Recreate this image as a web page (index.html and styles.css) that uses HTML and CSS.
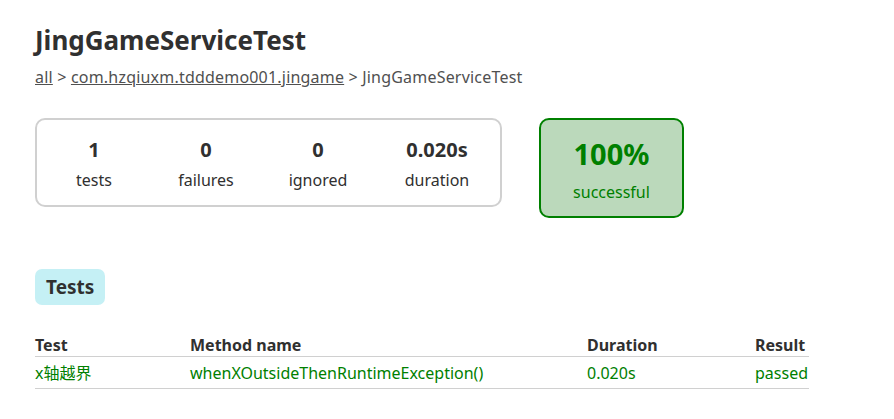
FILE: index.html
```html
<!DOCTYPE html>
<html>
<head>
<meta charset="utf-8">
<link rel="stylesheet" href="styles.css">
</head>
<body>
<div class="content">
  <h1 class="title">JingGameServiceTest</h1>
  <div class="breadcrumbs"><a href="#">all</a> &gt; <a href="#">com.hzqiuxm.tdddemo001.jingame</a> &gt; JingGameServiceTest</div>
  <div class="summary">
    <div class="summary-group">
      <div class="info-box"><div class="counter">1</div><p class="label">tests</p></div>
      <div class="info-box"><div class="counter">0</div><p class="label">failures</p></div>
      <div class="info-box"><div class="counter">0</div><p class="label">ignored</p></div>
      <div class="info-box last"><div class="counter">0.020s</div><p class="label">duration</p></div>
    </div>
    <div class="success-rate">
      <div class="percent">100%</div>
      <p class="label">successful</p>
    </div>
  </div>
  <div class="tabs">
    <span class="tab selected">Tests</span>
  </div>
  <table class="tests">
    <thead>
      <tr><th class="c1">Test</th><th class="c2">Method name</th><th class="c3">Duration</th><th class="c4">Result</th></tr>
    </thead>
    <tbody>
      <tr class="success"><td>x轴越界</td><td>whenXOutsideThenRuntimeException()</td><td>0.020s</td><td>passed</td></tr>
    </tbody>
  </table>
</div>
</body>
</html>
```
FILE: styles.css
```css
html, body {
  margin: 0;
  padding: 0;
  background: #ffffff;
}
body {
  font-family: "Noto Sans", "Noto Sans CJK SC", sans-serif;
  font-size: 16px;
  color: #303030;
}
.content {
  padding: 22px 0 0 35px;
}
.title {
  margin: 0;
  font-size: 26px;
  font-weight: bold;
  line-height: 36px;
}
.breadcrumbs {
  margin-top: 8px;
  font-size: 16px;
  line-height: 22px;
  color: #505050;
  letter-spacing: 0.2px;
}
.breadcrumbs a {
  color: #505050;
  text-decoration: underline;
}
.summary {
  display: flex;
  align-items: flex-start;
  margin-top: 30px;
}
.summary-group {
  display: flex;
  border: 2px solid #d0d0d0;
  border-radius: 10px;
  width: 467px;
  height: 89px;
  box-sizing: border-box;
  padding-left: 1px;
}
.info-box {
  width: 112px;
  text-align: center;
  padding-top: 17px;
}
.info-box.last {
  flex: 1;
}
.counter {
  font-size: 20px;
  font-weight: bold;
  line-height: 26px;
}
.label {
  margin: 6px 0 0;
  font-size: 16px;
  line-height: 22px;
}
.success-rate {
  margin-left: 37px;
  width: 145px;
  height: 100px;
  box-sizing: border-box;
  border: 2px solid #008000;
  border-radius: 10px;
  background: #bbd9bb;
  color: #008000;
  text-align: center;
  padding-top: 15px;
}
.percent {
  font-size: 29px;
  font-weight: bold;
  line-height: 38px;
}
.success-rate .label {
  margin-top: 8px;
}
.tabs {
  margin-top: 51px;
}
.tab {
  display: inline-block;
  background: #c5f0f5;
  border-radius: 7px;
  padding: 6px 11px;
  font-size: 19px;
  font-weight: bold;
  line-height: 24px;
}
.tests {
  margin-top: 29px;
  border-collapse: collapse;
  width: 774px;
}
.tests th, .tests td {
  text-align: left;
  padding: 0;
  font-size: 16px;
  line-height: 22px;
}
.tests th {
  font-weight: bold;
  border-bottom: 1px solid #d0d0d0;
}
.tests td {
  border-bottom: 1px solid #d0d0d0;
  padding: 5px 0 4px;
}
.c1 { width: 155px; }
.c2 { width: 397px; }
.c3 { width: 168px; }
.success td {
  color: #008000;
}
```
